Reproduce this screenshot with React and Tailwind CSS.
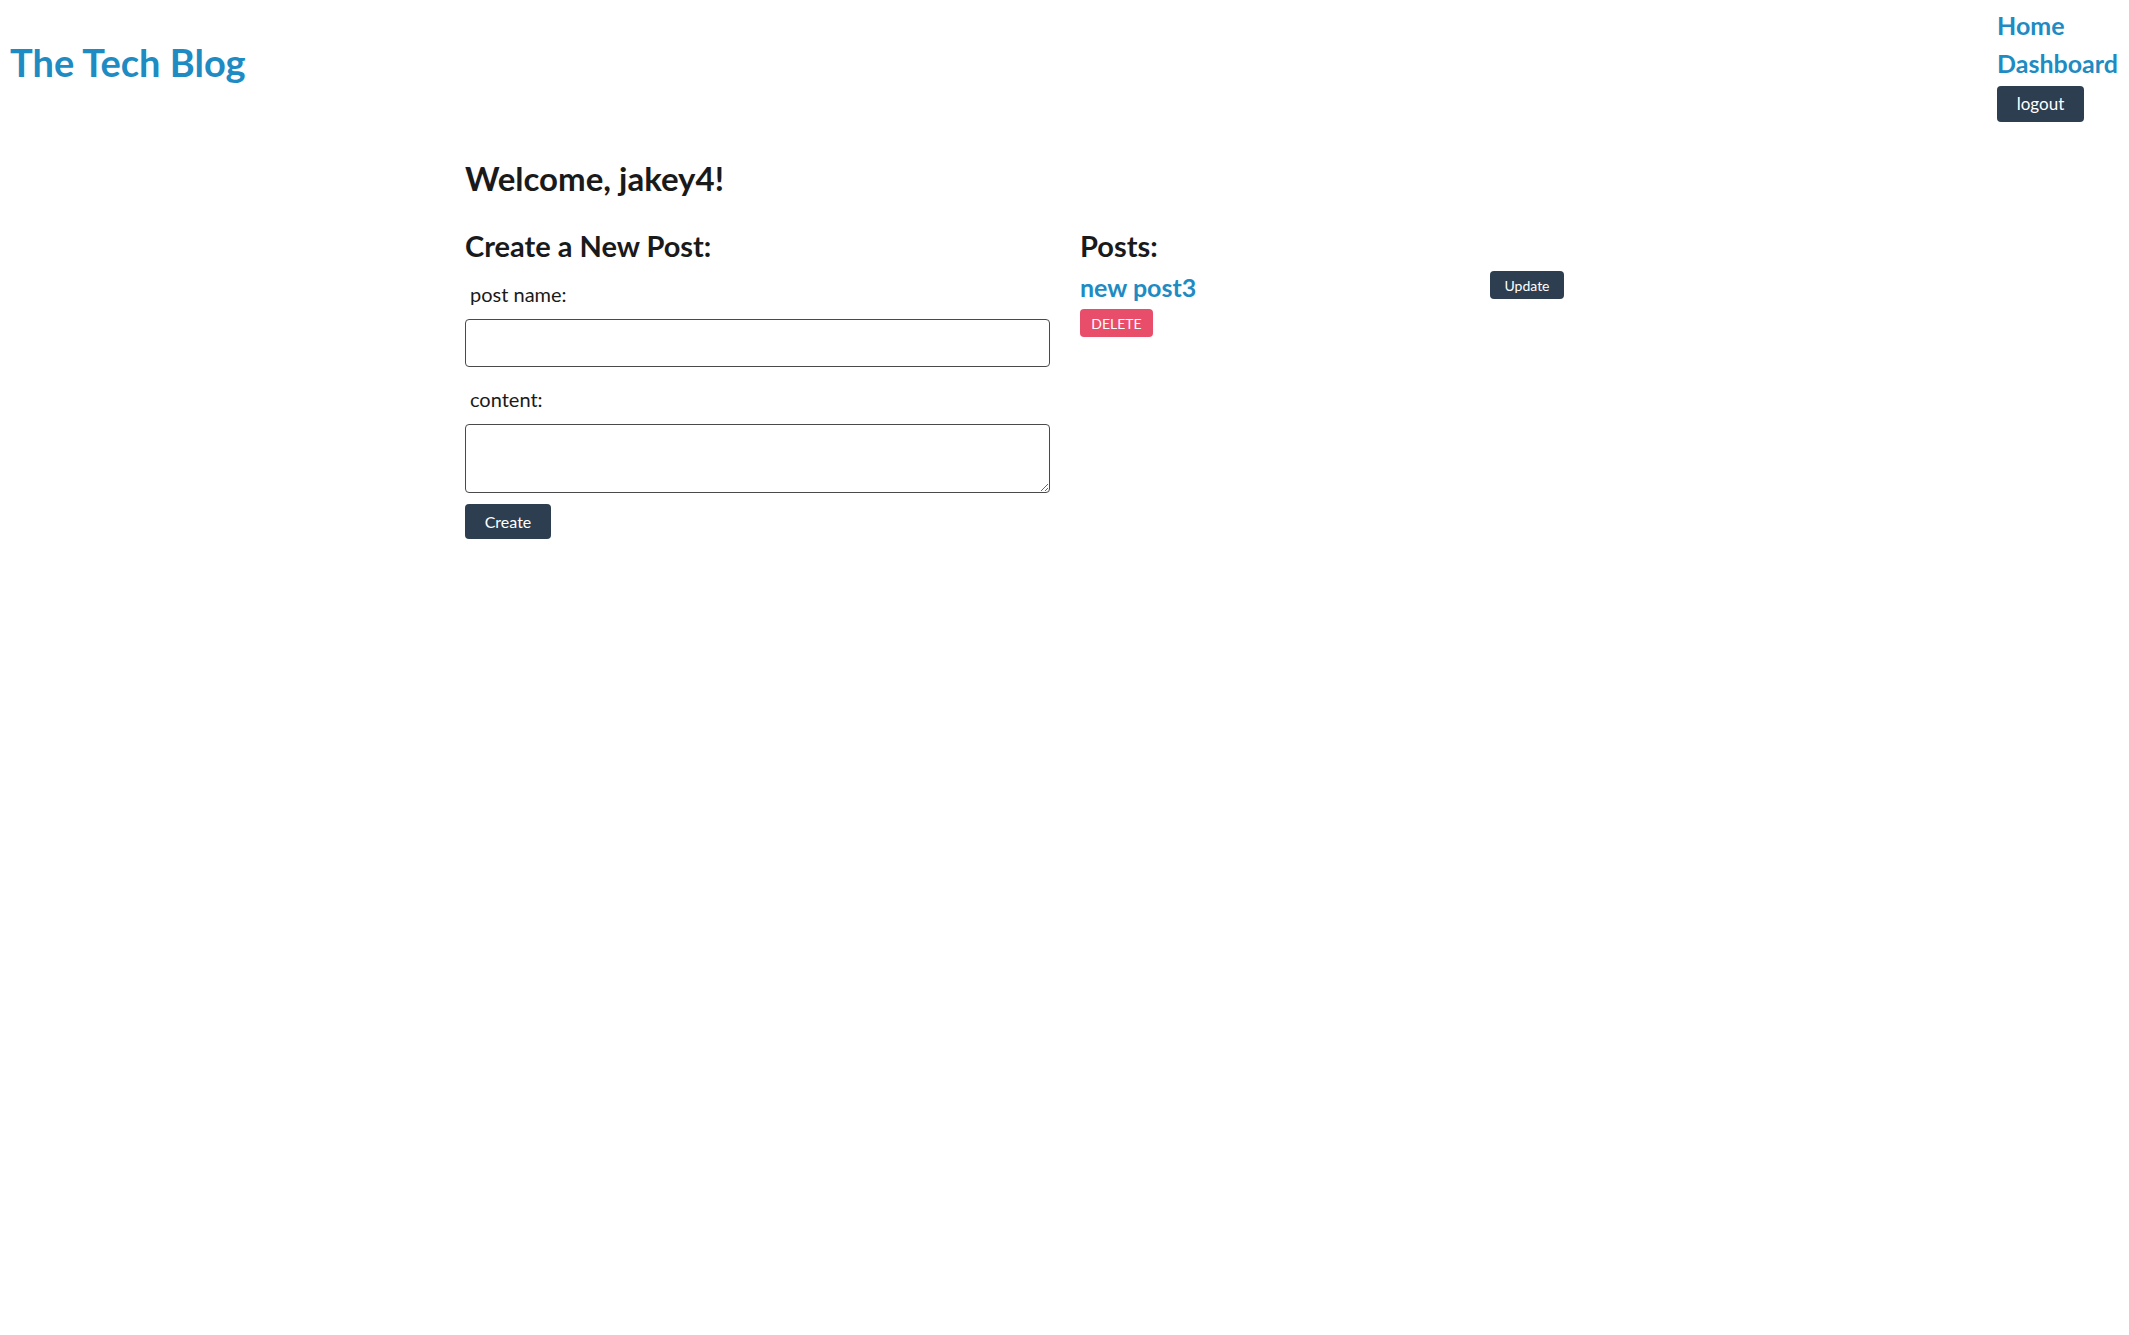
import React from 'react';

const posts = [{ id: 3, title: 'new post3' }];

const Header = () => {
  return (
    <header className="flex justify-between items-start">
      <h1 className="pl-[10px] pt-[36px] text-[38px] leading-[52px] font-bold text-[#1e8bc3]">
        The Tech Blog
      </h1>
      <nav className="flex flex-col items-start w-[132px] pt-[6px]">
        <a href="#" className="text-[25px] leading-[38px] font-bold text-[#1e8bc3]">Home</a>
        <a href="#" className="text-[25px] leading-[38px] font-bold text-[#1e8bc3]">Dashboard</a>
        <button className="mt-[4px] w-[87px] h-[36px] rounded-[4px] bg-[#2c3e50] text-white text-[17px]">
          logout
        </button>
      </nav>
    </header>
  );
};

const App = () => {
  return (
    <div className="min-h-screen bg-white text-[#1a1a1a] font-['Lato',sans-serif]">
      <Header />
      <main className="w-[1199px] mx-auto pt-[36px]">
        <h2 className="text-[33px] leading-[40px] font-bold">Welcome, jakey4!</h2>
        <div className="flex gap-[30px] mt-[30px]">
          <section className="w-[585px]">
            <h3 className="text-[29px] leading-[36px] font-bold">Create a New Post:</h3>
            <form className="flex flex-col items-start">
              <label className="mt-[17px] pl-[5px] text-[20px] leading-[26px]">post name:</label>
              <input
                type="text"
                className="mt-[12px] h-[48px] w-full rounded-[4px] border border-[#4a4a4a] px-2"
              />
              <label className="mt-[19px] pl-[5px] text-[20px] leading-[26px]">content:</label>
              <textarea className="mt-[12px] h-[69px] w-full rounded-[4px] border border-[#4a4a4a] px-2" />
              <button
                type="button"
                className="mt-[11px] w-[86px] h-[35px] rounded-[4px] bg-[#2c3e50] text-white text-[16px]"
              >
                Create
              </button>
            </form>
          </section>
          <section className="w-[484px]">
            <h3 className="text-[29px] leading-[36px] font-bold">Posts:</h3>
            {posts.map((post) => (
              <div key={post.id} className="flex justify-between items-start mt-[6px]">
                <div className="flex flex-col items-start">
                  <a href="#" className="text-[25px] leading-[34px] font-bold text-[#1e8bc3]">
                    {post.title}
                  </a>
                  <button className="mt-[5px] w-[73px] h-[28px] rounded-[4px] bg-[#e84e6a] text-white text-[14px]">
                    DELETE
                  </button>
                </div>
                <button className="mt-[1px] w-[74px] h-[28px] rounded-[4px] bg-[#2c3e50] text-white text-[14px]">
                  Update
                </button>
              </div>
            ))}
          </section>
        </div>
      </main>
    </div>
  );
};

export default App;
